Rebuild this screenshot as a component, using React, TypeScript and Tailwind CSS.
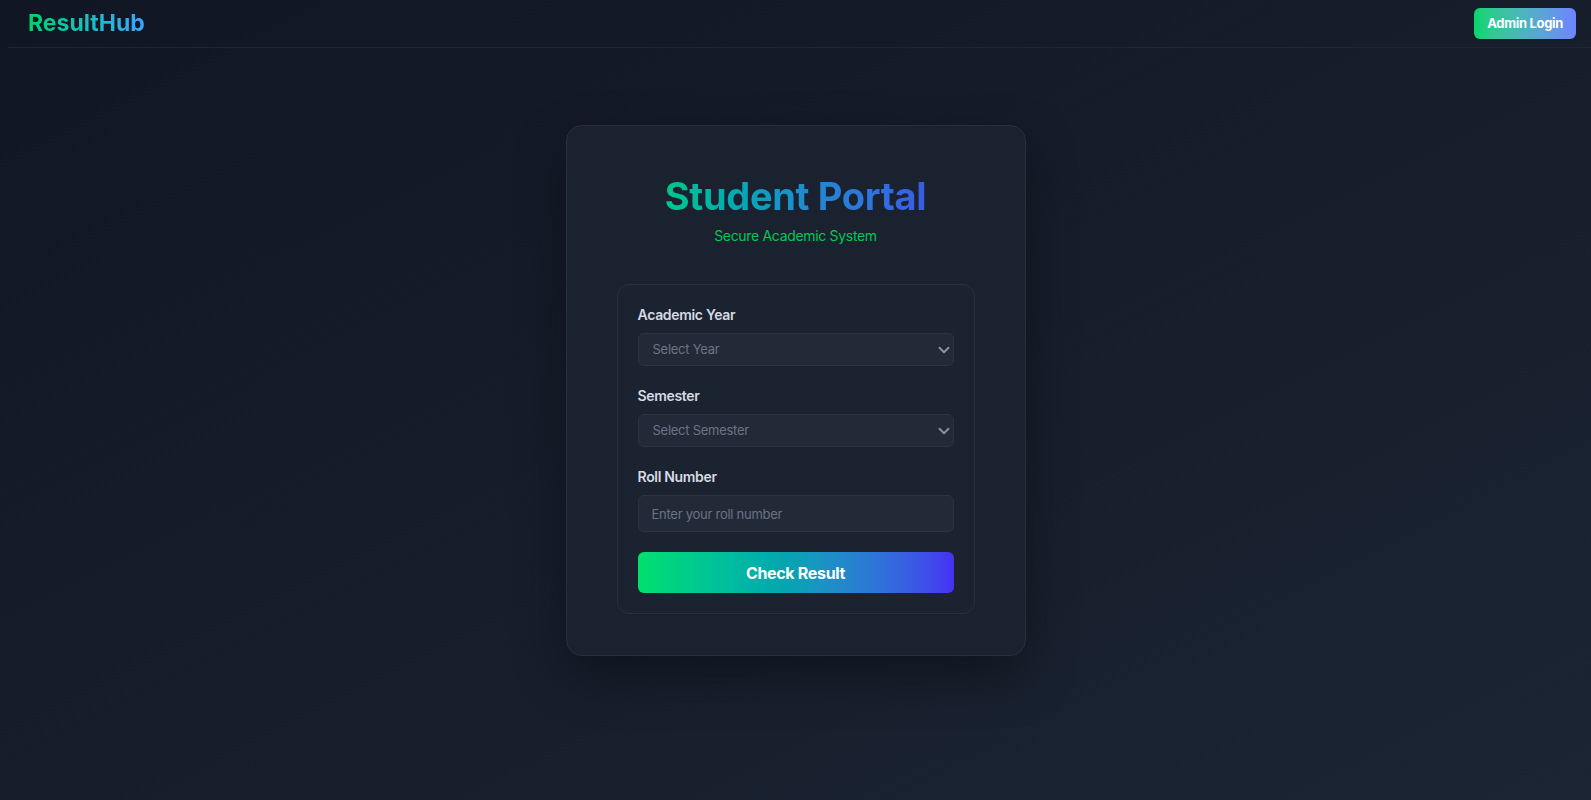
import { ChevronDown } from 'lucide-react'

const font = { fontFamily: 'Inter, "Noto Sans", sans-serif' }

function SelectField({ label, placeholder }: { label: string; placeholder: string }) {
  return (
    <div>
      <label className="mb-2 block text-sm font-semibold leading-5 text-[#d6dae1]">{label}</label>
      <div className="relative">
        <select
          className="h-[33px] w-full appearance-none rounded-md border border-[#2c3444] bg-[#222a38] pl-[14px] text-[13px] tracking-[-0.02em] text-[#6b7385] outline-none"
          defaultValue=""
        >
          <option value="" disabled>
            {placeholder}
          </option>
        </select>
        <ChevronDown
          className="pointer-events-none absolute right-[1px] top-1/2 -translate-y-1/2 text-[#8a92a2]"
          size={18}
          strokeWidth={2.5}
        />
      </div>
    </div>
  )
}

export default function App() {
  return (
    <div
      className="flex min-h-screen w-full flex-col bg-gradient-to-br from-[#111624] via-[#161d2b] to-[#1b2533] tracking-[-0.02em]"
      style={font}
    >
      <header className="pl-2">
        <div className="flex h-12 items-center justify-between border-b border-[#1f2636] pl-5 pr-[15px]">
          <div className="bg-gradient-to-r from-[#00d467] to-[#3ba2ff] bg-clip-text text-[23px] font-bold tracking-normal text-transparent">
            ResultHub
          </div>
          <button className="h-[31px] rounded-md bg-gradient-to-r from-[#00d66c] to-[#6f82ff] px-[13px] text-[13px] font-bold text-white">
            Admin Login
          </button>
        </div>
      </header>

      <main className="flex justify-center pt-[77px]">
        <div className="w-[460px] rounded-2xl border border-[#263043] bg-[#1a2230] px-[50px] pb-[41px] pt-[46px] shadow-[0_20px_50px_rgba(0,0,0,0.35)]">
          <h1 className="text-center text-[38px] font-bold leading-[48px]">
            <span className="bg-gradient-to-r from-[#00c68a] via-[#1b8fcc] to-[#3a5ae6] bg-clip-text text-transparent">
              Student Portal
            </span>
          </h1>
          <p className="mt-[6px] text-center text-sm leading-5 text-[#00c853]">Secure Academic System</p>

          <div className="mt-[38px] flex flex-col gap-5 rounded-xl border border-[#263043] bg-[#1b2331] p-5">
            <SelectField label="Academic Year" placeholder="Select Year" />
            <SelectField label="Semester" placeholder="Select Semester" />
            <div>
              <label className="mb-2 block text-sm font-semibold leading-5 text-[#d6dae1]">Roll Number</label>
              <input
                className="h-[37px] w-full rounded-md border border-[#2c3444] bg-[#222a38] px-[13px] text-[13px] tracking-[-0.02em] text-[#d6dae1] outline-none placeholder:text-[#6b7385]"
                placeholder="Enter your roll number"
              />
            </div>
            <button className="h-[41px] w-full rounded-md bg-gradient-to-r from-[#00e06c] via-[#0ba0b6] to-[#4530f2] text-base font-bold text-white">
              Check Result
            </button>
          </div>
        </div>
      </main>
    </div>
  )
}
